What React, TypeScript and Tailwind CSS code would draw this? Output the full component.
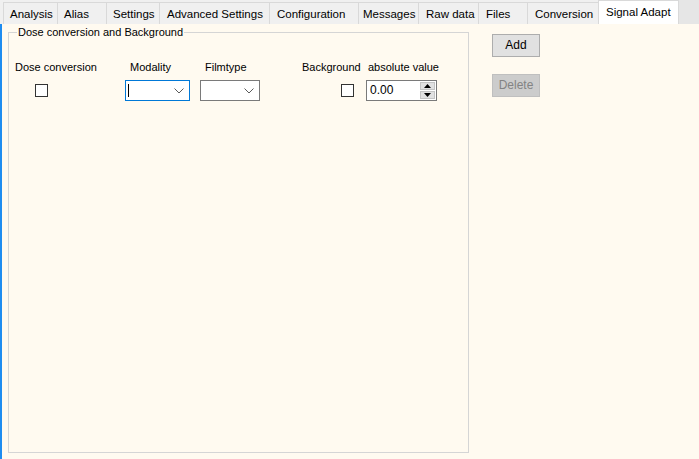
import React from "react";

const tabs: { label: string; w: string; pl: string; active?: boolean }[] = [
  { label: "Analysis", w: "w-[54px]", pl: "pl-[6px]" },
  { label: "Alias", w: "w-[49px]", pl: "pl-[6px]" },
  { label: "Settings", w: "w-[53px]", pl: "pl-[6px]" },
  { label: "Advanced Settings", w: "w-[110px]", pl: "pl-[7px]" },
  { label: "Configuration", w: "w-[89px]", pl: "pl-[7px]" },
  { label: "Messages", w: "w-[60px]", pl: "pl-[4px]" },
  { label: "Raw data", w: "w-[60px]", pl: "pl-[7px]" },
  { label: "Files", w: "w-[49px]", pl: "pl-[7px]" },
  { label: "Conversion", w: "w-[71px]", pl: "pl-[7px]" },
  { label: "Signal Adapt", w: "w-[81px]", pl: "pl-[7px]", active: true },
];

function Chevron() {
  return (
    <svg width="10" height="6" viewBox="0 0 10 6" className="block">
      <path d="M0.5 0.5 L5 5 L9.5 0.5" fill="none" stroke="#5a5a5a" strokeWidth="1" />
    </svg>
  );
}

function Checkbox() {
  return <div className="w-[13px] h-[13px] bg-white border border-[#333333]" />;
}

export default function App() {
  return (
    <div
      className="w-[699px] h-[459px] overflow-hidden bg-[#fffaf0] flex flex-col text-black"
      style={{ fontFamily: '"Liberation Sans", Arial, sans-serif' }}
    >
      {/* Tab strip */}
      <div className="h-[24px] flex bg-[#f0f0f0] shrink-0 relative">
        <div className="w-[3px] bg-[#f0f0f0]" />
        {tabs.map((t) =>
          t.active ? (
            <div
              key={t.label}
              className={`${t.w} ${t.pl} h-[24px] bg-white text-[11.5px] leading-[22px] border-x border-t border-[#d9d9d9] whitespace-nowrap overflow-hidden relative z-10`}
            >
              {t.label}
            </div>
          ) : (
            <div
              key={t.label}
              className={`${t.w} ${t.pl} h-[22px] mt-[2px] bg-[#f0f0f0] text-[11.5px] leading-[22px] border-l border-t border-[#d9d9d9] whitespace-nowrap overflow-hidden`}
            >
              {t.label}
            </div>
          )
        )}
        <div className="flex-1 bg-[#e6e6e6]" />
      </div>

      {/* Content */}
      <div className="flex-1 flex border-l-2 border-[#1e8cf0]">
        <fieldset className="ml-[6px] mt-[1px] mb-[6px] w-[461px] border border-[#d5d5d5] px-[6px] text-[11px]">
          <legend className="ml-[2px] px-[1px] leading-[14px] text-[11px]">Dose conversion and Background</legend>
          <div className="flex mt-[22px] leading-[12px]">
            {/* Dose conversion */}
            <div className="w-[110px] flex flex-col">
              <div className="h-[12px] whitespace-nowrap">Dose conversion</div>
              <div className="mt-[11px] ml-[20px]">
                <Checkbox />
              </div>
            </div>
            {/* Modality */}
            <div className="w-[75px] flex flex-col">
              <div className="h-[12px] ml-[5px]">Modality</div>
              <div className="mt-[7px] w-[65px] h-[21px] bg-white border border-[#0078d7] flex items-center justify-between pl-[2px] pr-[5px]">
                <div className="w-[1px] h-[13px] bg-black" />
                <Chevron />
              </div>
            </div>
            {/* Filmtype */}
            <div className="w-[102px] flex flex-col">
              <div className="h-[12px] ml-[5px]">Filmtype</div>
              <div className="mt-[7px] w-[60px] h-[21px] bg-white border border-[#7a7a7a] flex items-center justify-end pr-[5px]">
                <Chevron />
              </div>
            </div>
            {/* Background */}
            <div className="w-[64px] flex flex-col">
              <div className="h-[12px] whitespace-nowrap">Background</div>
              <div className="mt-[11px] ml-[39px]">
                <Checkbox />
              </div>
            </div>
            {/* absolute value */}
            <div className="flex flex-col">
              <div className="h-[12px] ml-[2px] whitespace-nowrap">absolute value</div>
              <div className="mt-[7px] w-[71px] h-[21px] bg-white border border-[#7a7a7a] flex items-stretch">
                <div className="flex-1 pl-[3px] text-[12px] leading-[19px]">0.00</div>
                <div className="w-[17px] flex flex-col p-[1px] gap-[1px]">
                  <div className="flex-1 bg-[#e1e1e1] border border-[#c4c4c4] flex items-center justify-center">
                    <svg width="7" height="4" viewBox="0 0 7 4"><path d="M0 4 L3.5 0 L7 4 Z" fill="#000" /></svg>
                  </div>
                  <div className="flex-1 bg-[#e1e1e1] border border-[#c4c4c4] flex items-center justify-center">
                    <svg width="7" height="4" viewBox="0 0 7 4"><path d="M0 0 L7 0 L3.5 4 Z" fill="#000" /></svg>
                  </div>
                </div>
              </div>
            </div>
          </div>
        </fieldset>

        {/* Buttons */}
        <div className="ml-[23px] mt-[10px] flex flex-col gap-[17px]">
          <button className="w-[48px] h-[23px] bg-[#e1e1e1] border border-[#adadad] text-[12px] leading-[21px] text-center text-black">
            Add
          </button>
          <button className="w-[48px] h-[23px] bg-[#cccccc] border border-[#bfbfbf] text-[12px] leading-[21px] text-center text-[#838383]">
            Delete
          </button>
        </div>
      </div>
    </div>
  );
}
